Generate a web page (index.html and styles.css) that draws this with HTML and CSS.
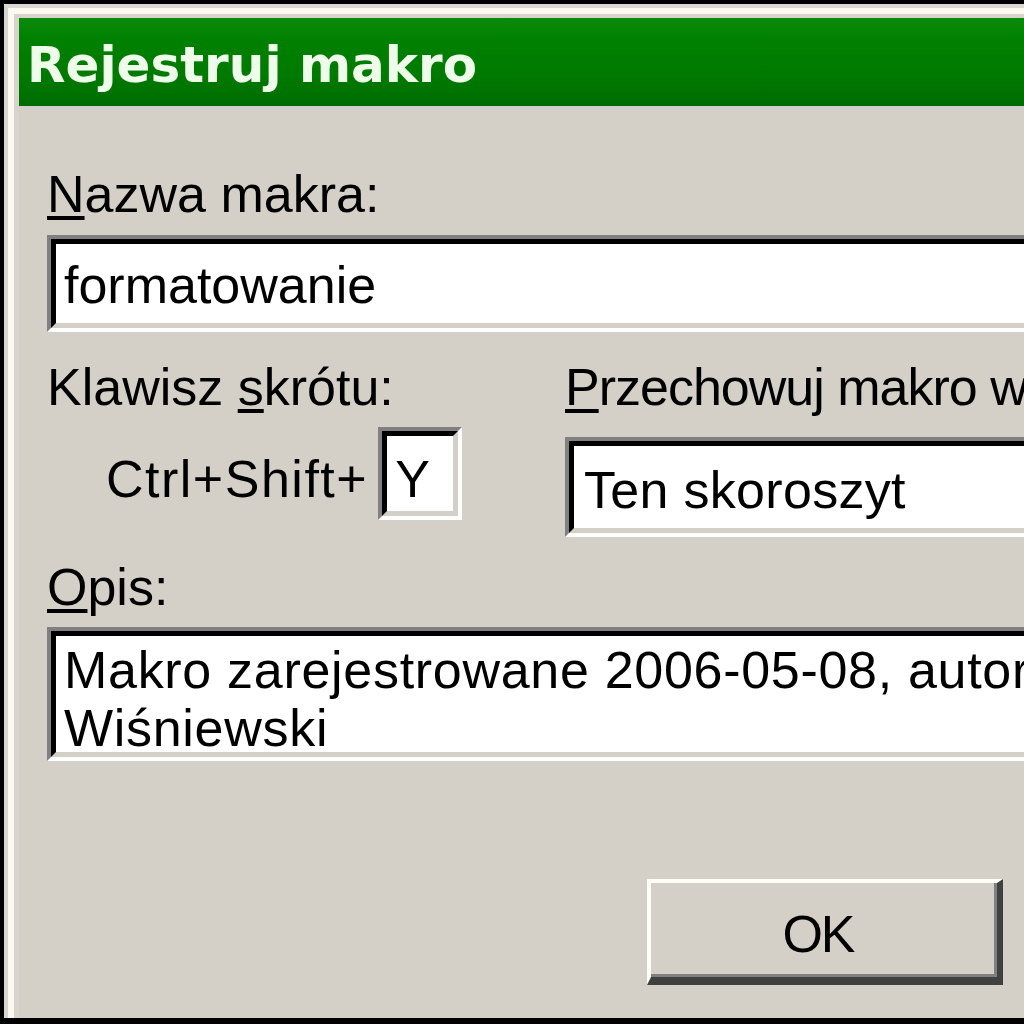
FILE: index.html
```html
<!DOCTYPE html>
<html lang="pl">
<head>
<meta charset="utf-8">
<title>Rejestruj makro</title>
<link rel="stylesheet" href="styles.css">
</head>
<body>
<div class="window">
  <div class="frame">
    <div class="titlebar"><span class="title">Rejestruj makro</span></div>
    <div class="content">
      <div class="label"><u>N</u>azwa makra:</div>
      <div class="field name-field"><div class="field-inner">formatowanie</div></div>

      <div class="row2">
        <div class="col-left">
          <div class="label">Klawisz <u>s</u>krótu:</div>
          <div class="shortcut">
            <span class="ctrl">Ctrl+Shift+</span>
            <div class="field keybox"><div class="field-inner">Y</div></div>
          </div>
        </div>
        <div class="col-right">
          <div class="label narrow"><u>P</u>rzechowuj makro w:</div>
          <div class="field combo"><div class="field-inner">Ten skoroszyt</div></div>
        </div>
      </div>

      <div class="label opis-label"><u>O</u>pis:</div>
      <div class="field opis"><div class="field-inner">Makro zarejestrowane 2006-05-08, autor<br>Wiśniewski</div></div>

      <div class="buttons">
        <div class="button">OK</div>
      </div>
    </div>
  </div>
</div>
</body>
</html>
```
FILE: styles.css
```css
html, body {
  margin: 0;
  padding: 0;
  overflow: hidden;
  width: 1024px;
  height: 1024px;
}

body {
  background: #000;
  padding: 4px 0 0 4px;
  box-sizing: border-box;
  font-family: "Liberation Sans", Arial, sans-serif;
  font-size: 52px;
  line-height: 58px;
  color: #000;
}

.window {
  width: 1200px;
  height: 1014px;
  box-sizing: border-box;
  border-top: 4px solid #dcd8d2;
  border-left: 4px solid #d8d4ce;
  background: #d4d0c8;
}

.frame {
  height: 100%;
  box-sizing: border-box;
  border-top: 6px solid #fbf9f0;
  border-left: 6px solid #fbf9f0;
  padding: 4px 0 0 5px;
  background: #d8d4cd;
}

.titlebar {
  height: 88px;
  box-sizing: border-box;
  padding: 6px 0 0 8px;
  background: linear-gradient(to bottom, #0c8a0c 0%, #008000 25%, #007a00 65%, #006c00 100%);
}

.title {
  font-family: "DejaVu Sans", Verdana, sans-serif;
  font-weight: bold;
  font-size: 50px;
  line-height: 82px;
  color: #eefcea;
  white-space: nowrap;
}

.content {
  background: #d4d0c8;
  padding: 0 0 0 28px;
  height: 912px;
  box-sizing: border-box;
  overflow: hidden;
}

.label {
  white-space: nowrap;
}

.label.narrow {
  letter-spacing: -1px;
}

u {
  text-decoration: underline;
  text-decoration-thickness: 4px;
  text-underline-offset: 4px;
}

.content > .label:first-child {
  padding-top: 59px;
}

/* sunken classic edit field */
.field {
  border-top: 4px solid #808080;
  border-left: 4px solid #808080;
  border-bottom: 4px solid #ffffff;
  border-right: 4px solid #ffffff;
  background: #fff;
}

.field-inner {
  border-top: 5px solid #000;
  border-left: 5px solid #000;
  border-bottom: 5px solid #d4d0c8;
  border-right: 5px solid #d4d0c8;
  background: #fff;
  white-space: nowrap;
}

.name-field {
  margin-top: 12px;
}

.name-field .field-inner {
  padding: 12px 0 9px 8px;
}

.row2 {
  display: grid;
  grid-template-columns: 518px 1fr;
  margin-top: 26px;
}

.shortcut {
  display: flex;
  align-items: baseline;
  margin-top: 11px;
}

.ctrl {
  margin-left: 59px;
  margin-right: 10px;
  letter-spacing: 1.5px;
  white-space: nowrap;
}

.keybox {
  width: 84px;
  box-sizing: border-box;
}

.keybox .field-inner {
  padding: 14px 0 3px 8px;
}

.combo {
  margin-top: 21px;
}

.combo .field-inner {
  padding: 15px 0 9px 10px;
  letter-spacing: 0.3px;
}

.opis-label {
  margin-top: 21px;
}

.opis {
  margin-top: 11px;
}

.opis .field-inner {
  height: 126px;
  box-sizing: border-box;
  padding: 5px 0 0 8px;
  line-height: 58px;
  overflow: hidden;
  letter-spacing: 0.7px;
}

.buttons {
  display: flex;
  margin-top: 118px;
  padding-left: 600px;
}

.button {
  width: 356px;
  height: 106px;
  box-sizing: border-box;
  border-top: 4px solid #fffff8;
  border-left: 4px solid #fffff8;
  border-right: 6px solid #404040;
  border-bottom: 8px solid #404040;
  box-shadow: inset -3px -3px 0 #808080;
  padding: 22px 12px 0 0;
  text-align: center;
  letter-spacing: -2px;
}
```
